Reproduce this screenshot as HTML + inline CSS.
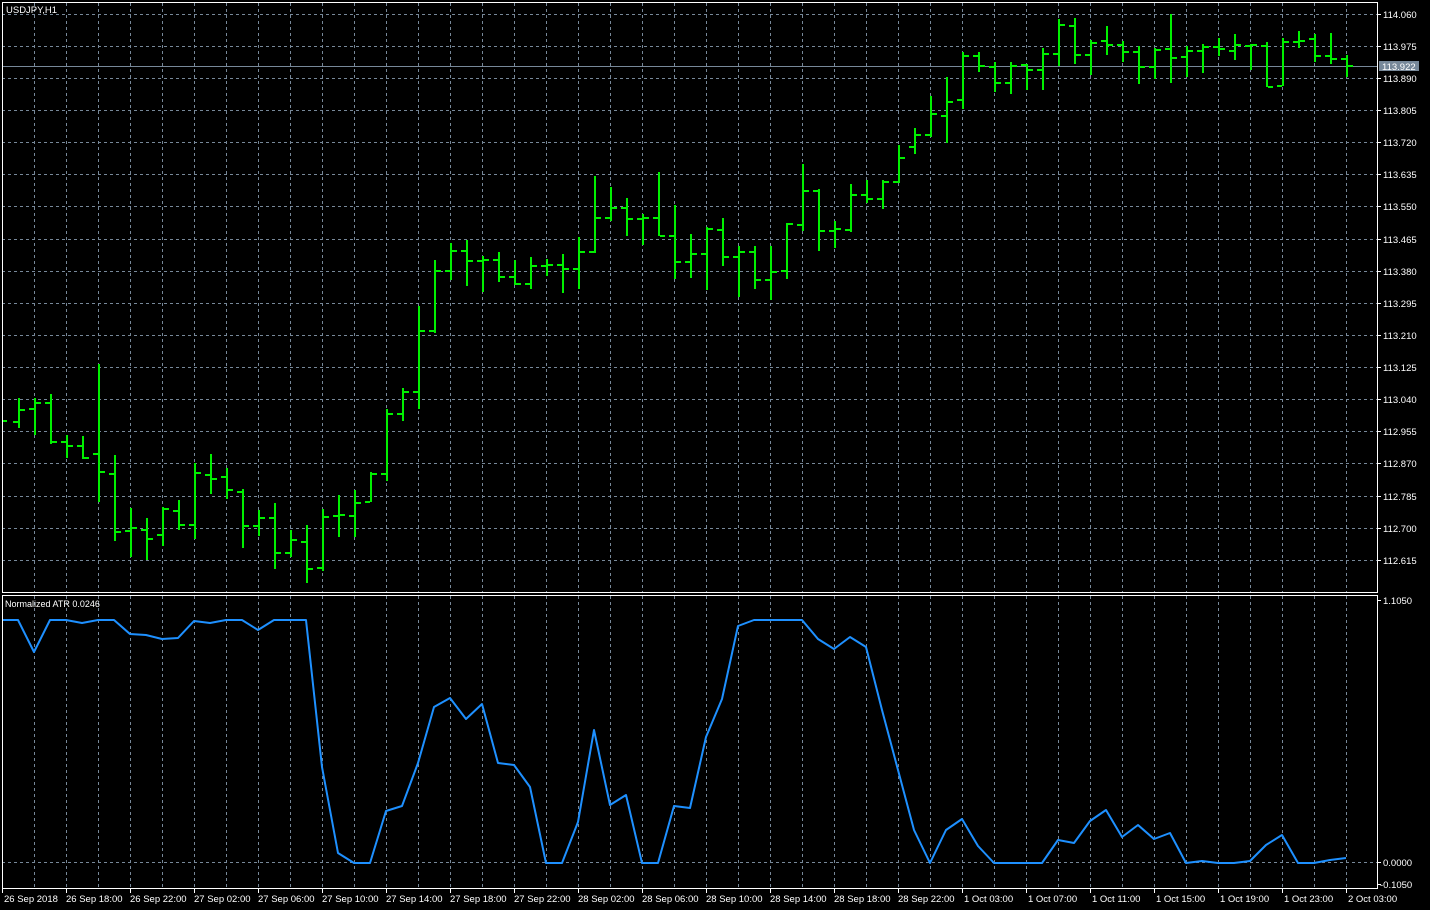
<!DOCTYPE html>
<html><head><meta charset="utf-8"><style>
html,body{margin:0;padding:0;background:#000;width:1430px;height:910px;overflow:hidden}
svg{display:block}
text{font-family:"Liberation Sans",sans-serif;font-size:9.5px;fill:#fff}
</style></head><body>
<svg width="1430" height="910" viewBox="0 0 1430 910" xmlns="http://www.w3.org/2000/svg" shape-rendering="crispEdges">
<rect width="1430" height="910" fill="#000"/>
<!-- grid main -->
<g stroke="#778899" stroke-width="1" stroke-dasharray="3,3" fill="none">
<path d="M2 14.5H1377M2 46.5H1377M2 110.5H1377M2 142.5H1377M2 174.5H1377M2 206.5H1377M2 239.5H1377M2 271.5H1377M2 303.5H1377M2 335.5H1377M2 367.5H1377M2 399.5H1377M2 431.5H1377M2 463.5H1377M2 496.5H1377M2 528.5H1377M2 560.5H1377M2 78.5H1377"/>
<path d="M34.5 3V592M66.5 3V592M98.5 3V592M130.5 3V592M162.5 3V592M194.5 3V592M226.5 3V592M258.5 3V592M290.5 3V592M322.5 3V592M354.5 3V592M386.5 3V592M418.5 3V592M450.5 3V592M482.5 3V592M514.5 3V592M546.5 3V592M578.5 3V592M610.5 3V592M642.5 3V592M674.5 3V592M706.5 3V592M738.5 3V592M770.5 3V592M802.5 3V592M834.5 3V592M866.5 3V592M898.5 3V592M930.5 3V592M962.5 3V592M994.5 3V592M1026.5 3V592M1058.5 3V592M1090.5 3V592M1122.5 3V592M1154.5 3V592M1186.5 3V592M1218.5 3V592M1250.5 3V592M1282.5 3V592M1314.5 3V592M1346.5 3V592"/>
<path d="M34.5 596V888M66.5 596V888M98.5 596V888M130.5 596V888M162.5 596V888M194.5 596V888M226.5 596V888M258.5 596V888M290.5 596V888M322.5 596V888M354.5 596V888M386.5 596V888M418.5 596V888M450.5 596V888M482.5 596V888M514.5 596V888M546.5 596V888M578.5 596V888M610.5 596V888M642.5 596V888M674.5 596V888M706.5 596V888M738.5 596V888M770.5 596V888M802.5 596V888M834.5 596V888M866.5 596V888M898.5 596V888M930.5 596V888M962.5 596V888M994.5 596V888M1026.5 596V888M1058.5 596V888M1090.5 596V888M1122.5 596V888M1154.5 596V888M1186.5 596V888M1218.5 596V888M1250.5 596V888M1282.5 596V888M1314.5 596V888M1346.5 596V888"/>
<path d="M2 862.5H1377"/>
</g>
<!-- current price line -->
<path d="M2 66.5H1377" stroke="#778899" stroke-width="1"/>
<!-- bars -->
<path fill="none" stroke="#00f000" stroke-width="2" d="
M2 421H7
M19 398V428M13 422H18M20 410H25
M35 398V435M29 409H34M36 403H41
M51 394V444M45 403H50M52 442H57
M67 435V458M61 442H66M68 446H73
M83 436V459M77 446H82M84 458H89
M99 364V502M93 454H98M100 472H105
M115 455V541M109 474H114M116 532H121
M131 508V557M125 531H130M132 528H137
M147 518V560M141 530H146M148 539H153
M163 507V546M157 535H162M164 509H169
M179 500V530M173 511H178M180 525H185
M195 463V539M189 525H194M196 473H201
M211 454V494M205 475H210M212 479H217
M227 468V499M221 477H226M228 490H233
M243 489V548M237 492H242M244 526H249
M259 510V536M253 526H258M260 518H265
M275 503V569M269 518H274M276 553H281
M291 530V557M285 553H290M292 540H297
M307 525V583M301 542H306M308 569H313
M323 509V571M317 568H322M324 517H329
M339 495V537M333 516H338M340 515H345
M355 490V537M349 516H354M356 503H361
M371 472V502M365 502H370M372 474H377
M387 409V481M381 474H386M388 414H393
M403 388V421M397 414H402M404 392H409
M419 306V409M413 392H418M420 331H425
M435 260V333M429 331H434M436 271H441
M451 243V280M445 271H450M452 251H457
M467 240V286M461 251H466M468 261H473
M483 256V292M477 261H482M484 260H489
M499 252V282M493 260H498M500 277H505
M515 260V285M509 277H514M516 284H521
M531 257V289M525 284H530M532 266H537
M547 259V276M541 266H546M548 265H553
M563 254V293M557 265H562M564 269H569
M579 237V289M573 269H578M580 252H585
M595 176V253M589 252H594M596 218H601
M611 187V221M605 218H610M612 208H617
M627 198V236M621 208H626M628 219H633
M643 214V245M637 219H642M644 218H649
M659 172V236M653 218H658M660 236H665
M675 205V279M669 236H674M676 262H681
M691 234V278M685 262H690M692 254H697
M707 227V290M701 254H706M708 229H713
M723 218V266M717 230H722M724 257H729
M739 246V297M733 257H738M740 252H745
M755 246V289M749 252H754M756 280H761
M771 246V300M765 280H770M772 272H777
M787 223V279M781 271H786M788 224H793
M803 164V231M797 225H802M804 191H809
M819 189V251M813 191H818M820 231H825
M835 221V248M829 231H834M836 229H841
M851 184V232M845 230H850M852 195H857
M867 180V203M861 195H866M868 199H873
M883 180V209M877 199H882M884 182H889
M899 145V183M893 182H898M900 158H905
M915 128V154M909 147H914M916 135H921
M931 96V137M925 135H930M932 114H937
M947 77V143M941 116H946M948 102H953
M963 52V109M957 100H962M964 56H969
M979 52V72M973 56H978M980 66H985
M995 62V92M989 67H994M996 83H1001
M1011 62V94M1005 83H1010M1012 66H1017
M1027 64V90M1021 65H1026M1028 70H1033
M1043 48V90M1037 70H1042M1044 54H1049
M1059 19V66M1053 54H1058M1060 25H1065
M1075 18V64M1069 26H1074M1076 55H1081
M1091 40V75M1085 55H1090M1092 43H1097
M1107 26V55M1101 41H1106M1108 45H1113
M1123 41V62M1117 45H1122M1124 52H1129
M1139 46V84M1133 52H1138M1140 67H1145
M1155 48V79M1149 67H1154M1156 50H1161
M1171 14V83M1165 49H1170M1172 58H1177
M1187 46V77M1181 57H1186M1188 51H1193
M1203 44V73M1197 51H1202M1204 47H1209
M1219 38V56M1213 47H1218M1220 49H1225
M1235 34V60M1229 51H1234M1236 45H1241
M1251 44V70M1245 46H1250M1252 45H1257
M1267 42V87M1261 46H1266M1268 87H1273
M1283 38V86M1277 86H1282M1284 42H1289
M1299 31V48M1293 42H1298M1300 41H1305
M1315 34V62M1309 39H1314M1316 56H1321
M1331 33V64M1325 56H1330M1332 59H1337
M1347 55V77M1341 59H1346M1348 66H1353"/>
<!-- ATR line -->
<polyline fill="none" stroke="#1e90ff" stroke-width="2" shape-rendering="auto" stroke-linejoin="round" points="
2,620 18,620 34,652 50,620 66,620 82,623 98,620 114,620 130,634 146,635 162,639 178,638 194,621 210,623 226,620 242,620 258,630 274,620 306,620 322,767 338,853 354,863 370,863 386,811 402,806 418,763 434,707 450,698 466,719 482,704 498,763 514,765 530,787 546,863 562,863 578,822 594,730 610,805 626,795 642,863 658,863 674,806 690,808 706,737 722,699 738,626 754,620 802,620 818,639 834,649 850,637 866,647 882,710 898,770 914,830 930,863 946,830 962,819 978,846 994,863 1042,863 1058,840 1074,843 1090,821 1106,810 1122,837 1138,825 1154,839 1170,833 1186,863 1202,861 1218,863 1234,863 1250,861 1266,845 1282,835 1298,863 1314,863 1330,860 1346,858"/>
<!-- borders -->
<g fill="none" stroke="#fff" stroke-width="1">
<path d="M2.5 2.5H1377.5V592.5H2.5Z"/>
<path d="M2.5 595.5H1377.5V888.5H2.5Z"/>
<path d="M1377 14.5H1381M1377 46.5H1381M1377 78.5H1381M1377 110.5H1381M1377 142.5H1381M1377 174.5H1381M1377 206.5H1381M1377 239.5H1381M1377 271.5H1381M1377 303.5H1381M1377 335.5H1381M1377 367.5H1381M1377 399.5H1381M1377 431.5H1381M1377 463.5H1381M1377 496.5H1381M1377 528.5H1381M1377 560.5H1381M1377 600.5H1381M1377 862.5H1381M1377 884.5H1381"/>
<path d="M2.5 888V893M66.5 888V893M130.5 888V893M194.5 888V893M258.5 888V893M322.5 888V893M386.5 888V893M450.5 888V893M514.5 888V893M578.5 888V893M642.5 888V893M706.5 888V893M770.5 888V893M834.5 888V893M898.5 888V893M962.5 888V893M1026.5 888V893M1090.5 888V893M1154.5 888V893M1218.5 888V893M1282.5 888V893M1346.5 888V893"/>
</g>
<!-- price label box -->
<rect x="1379" y="61" width="40" height="10" fill="#778899"/>
<text x="1382" y="70" style="fill:#fff">113.922</text>
<text x="6" y="13">USDJPY,H1</text>
<text x="5" y="607" style="font-size:9px">Normalized ATR 0.0246</text>
<g>
<text x="1383" y="18">114.060</text>
<text x="1383" y="50">113.975</text>
<text x="1383" y="82">113.890</text>
<text x="1383" y="114">113.805</text>
<text x="1383" y="146">113.720</text>
<text x="1383" y="178">113.635</text>
<text x="1383" y="210">113.550</text>
<text x="1383" y="243">113.465</text>
<text x="1383" y="275">113.380</text>
<text x="1383" y="307">113.295</text>
<text x="1383" y="339">113.210</text>
<text x="1383" y="371">113.125</text>
<text x="1383" y="403">113.040</text>
<text x="1383" y="435">112.955</text>
<text x="1383" y="467">112.870</text>
<text x="1383" y="500">112.785</text>
<text x="1383" y="532">112.700</text>
<text x="1383" y="564">112.615</text>
<text x="1383" y="604">1.1050</text>
<text x="1383" y="866">0.0000</text>
<text x="1380" y="888">-0.1050</text>
</g>
<g>
<text x="4" y="902">26 Sep 2018</text>
<text x="66" y="902">26 Sep 18:00</text>
<text x="130" y="902">26 Sep 22:00</text>
<text x="194" y="902">27 Sep 02:00</text>
<text x="258" y="902">27 Sep 06:00</text>
<text x="322" y="902">27 Sep 10:00</text>
<text x="386" y="902">27 Sep 14:00</text>
<text x="450" y="902">27 Sep 18:00</text>
<text x="514" y="902">27 Sep 22:00</text>
<text x="578" y="902">28 Sep 02:00</text>
<text x="642" y="902">28 Sep 06:00</text>
<text x="706" y="902">28 Sep 10:00</text>
<text x="770" y="902">28 Sep 14:00</text>
<text x="834" y="902">28 Sep 18:00</text>
<text x="898" y="902">28 Sep 22:00</text>
<text x="964" y="902">1 Oct 03:00</text>
<text x="1028" y="902">1 Oct 07:00</text>
<text x="1092" y="902">1 Oct 11:00</text>
<text x="1156" y="902">1 Oct 15:00</text>
<text x="1220" y="902">1 Oct 19:00</text>
<text x="1284" y="902">1 Oct 23:00</text>
<text x="1348" y="902">2 Oct 03:00</text>
</g>
</svg>
</body></html>
